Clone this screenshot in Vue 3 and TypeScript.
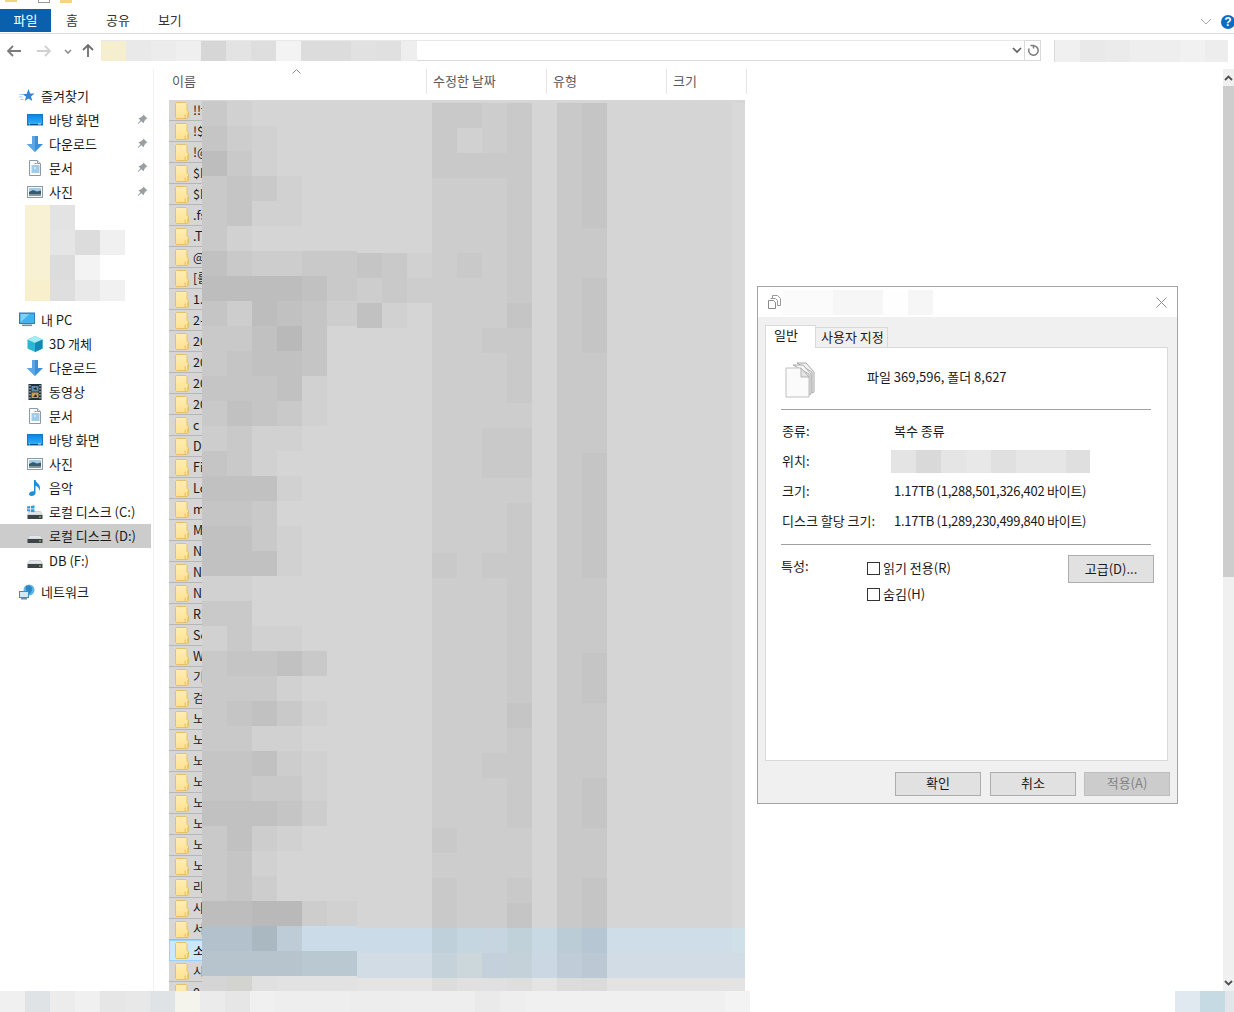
<script setup lang="ts">
const gray = (d: string): string => {
  const v = 0xb5 + 4 * parseInt(d, 10)
  return `rgb(${v},${v},${v})`
}
const fromDigits = (s: string): string[] => s.split('').map(gray)

const leftRows: string[][] = [
  '578888', '467888', '257888', '545788', '547788', '578888', '356655', '222235', '462346', '553148', '543348',
  '444378', '534578', '657788', '457888', '333788', '445888', '335788', '333788', '778888', '558888', '757788',
  '544358', '555788', '543578', '557788', '443678', '445578', '333468', '536788', '547888', '546888', '221167',
].map(fromDigits)
leftRows.push(
  ['#b2c1cb', '#b2c1cb', '#a9b8c1', '#bdccd6', '#ccdbe8', '#ccdbe8'],
  ['#b7c4ce', '#b7c4ce', '#b7c4ce', '#b7c4ce', '#bac8d2', '#bac8d2'],
  ['#d5d5d5', '#d3d3d0', '#e0e0e0', '#e2e2e2', '#e2e2e2', '#e2e2e2'],
)

const rightRows: string[][] = [
  '8885565854', '8885765854', '8885555854', '8886665854', '8886665854', '8886665855', '4576565855', '6566665854',
  '3786664854', '8886655854', '8886665855', '8886665855', '8886666855', '8886655855', '8886655854', '8886666854',
  '8886665854', '8886665854', '8885655854', '8886665855', '8886665855', '8886665855', '8886665854', '8886665854',
  '8886664855', '8886665855', '8886655855', '8886665854', '8886665854', '8885666855', '8886666855', '8885665854',
  '8885664854',
].map((s) => fromDigits(s + '888889'))
const pad = (head: string[], mid: string, last: string): string[] => [...head, mid, mid, mid, mid, mid, last]
rightRows.push(
  pad(['#ccdbe8', '#ccdbe8', '#ccdbe8', '#c0d0da', '#c6d6e0', '#c6d5df', '#c1d1da', '#c9d9e4', '#bcccd7', '#b6c6d2'], '#cfdde9', '#d0e0e8'),
  pad(['#d2dce5', '#d2dce5', '#d2dce5', '#c5d2da', '#ccd7dc', '#c4d0db', '#c4d1d8', '#cbd8e3', '#c0ccd7', '#bcc8d3'], '#d2dce5', '#d2dce5'),
  pad(['#e4e4e4', '#e4e4e4', '#e4e4e4', '#dddddd', '#e0e0e0', '#e0e0e0', '#dedede', '#e4e4e4', '#dcdcdc', '#dbdbdb'], '#e3e3e3', '#e3e3e3'),
)

const names: string[] = [
  '!!t', '!$', '!@', '$I', '$I', '.fs', '.T', '@', '[를', '1.', '2-', '20', '20', '20', '20', 'c', 'D', 'Fi', 'Lo', 'm', 'M',
  'N', 'N', 'N', 'RI', 'Se', 'W', '기', '검', '노', '노', '노', '노', '노', '노', '노', '노', '라', '사', '서', '소', '시', '0',
]
const selectedRow = 40

interface NavItem { label: string; icon: string; pin?: boolean; top?: boolean; selected?: boolean }
const favorites: NavItem[] = [
  { label: '즐겨찾기', icon: 'star', top: true },
  { label: '바탕 화면', icon: 'desktop', pin: true },
  { label: '다운로드', icon: 'down', pin: true },
  { label: '문서', icon: 'doc', pin: true },
  { label: '사진', icon: 'pic', pin: true },
]
const computer: NavItem[] = [
  { label: '내 PC', icon: 'pc', top: true },
  { label: '3D 개체', icon: 'cube' },
  { label: '다운로드', icon: 'down' },
  { label: '동영상', icon: 'film' },
  { label: '문서', icon: 'doc' },
  { label: '바탕 화면', icon: 'desktop' },
  { label: '사진', icon: 'pic' },
  { label: '음악', icon: 'note' },
  { label: '로컬 디스크 (C:)', icon: 'diskc' },
  { label: '로컬 디스크 (D:)', icon: 'disk', selected: true },
  { label: 'DB (F:)', icon: 'disk' },
]
const navMosaic: string[][] = [
  ['#f8f1d3', '#e3e3e3', '#ffffff', '#ffffff'],
  ['#f8f1d3', '#e5e5e5', '#dcdcdc', '#f0f0f0'],
  ['#f8f1d3', '#dcdcdc', '#f3f3f3', '#ffffff'],
  ['#f8f0cc', '#dedede', '#e9e9e9', '#f1f1f1'],
]
const addressCells: string[] = ['#f6efcf', '#e9e9e9', '#ececec', '#efefef', '#d6d6d6', '#e3e3e3', '#dedede', '#f3f3f3', '#dcdcdc', '#dcdcdc', '#e1e1e1', '#e0e0e0', '#eeeeee']
const searchCells: string[] = ['#f0f0f0', '#e9e9e9', '#ebebeb', '#eeeeee', '#eeeeee', '#f1f1f1', '#ededed']
const titleCells: string[] = ['#fbfbfb', '#fbfbfb', '#f6f6f6', '#f6f6f6', '#fefefe', '#f6f6f6']
const locationCells: string[] = ['#e4e4e4', '#d9d9d9', '#e5e5e5', '#e8e8e8', '#e0e0e0', '#e6e6e6', '#e6e6e6', '#dfdfdf']
const statusCells: string[] = [
  '#f0f0f0', '#dfe3e6', '#ececec', '#f0f0f0', '#e6e6e6', '#e8e8e8', '#dfe3e6', '#f5f4ec', '#ebebeb', '#e6e6e6',
  '#f0f0f0', '#eeeeee', '#eeeeee', '#eeeeee', '#ededed', '#ededed', '#eeeeee', '#eeeeee', '#eeeeee', '#eaeaea',
  '#eeeeee', '#f0f0f0', '#f0f0f0', '#f0f0f0', '#f0f0f0', '#f0f0f0', '#f0f0f0', '#f0f0f0', '#f0f0f0', '#f3f3f3',
]
const statusRight: string[] = ['#e0e9ef', '#c5dae2', '#e0e6ea']
</script>

<template>
  <div class="page">
    <svg class="sprite" width="0" height="0" aria-hidden="true">
      <defs>
        <linearGradient id="gBlue" x1="0" y1="0" x2="0" y2="1"><stop offset="0" stop-color="#0a86e2" /><stop offset="1" stop-color="#2eaefa" /></linearGradient>
        <linearGradient id="gFolder" x1="0" y1="0" x2="0" y2="1"><stop offset="0" stop-color="#ffedb4" /><stop offset="1" stop-color="#ffe290" /></linearGradient>
        <symbol id="star" viewBox="0 0 16 16"><path d="M9.500 1l1.600 4.400 4.400.2-3.500 2.800 1.300 4.600-3.900-2.600-3.600 2.700L7 8.600 3 6h4.600z" fill="#2f86d4" /><path d="M0.500 6.500h4M0 9h3.500M1.500 11.500h3" stroke="#9cc7ea" stroke-width="1" /></symbol>
        <symbol id="desktop" viewBox="0 0 16 16"><rect x="0" y="2" width="16" height="11.500" fill="#1279c8" /><rect x="1" y="3" width="14" height="9" fill="url(#gBlue)" /><path d="M1 12.500h14" stroke="#0b4f8a" /><path d="M11 12h3M2 12h1" stroke="#d9eefc" /></symbol>
        <symbol id="down" viewBox="0 0 16 16"><path d="M5 0h6v8h5l-8 8-8-8h5z" fill="#3d8fd6" /><path d="M5 0h3v16l-8-8h5z" fill="#5aa6e6" /></symbol>
        <symbol id="doc" viewBox="0 0 16 16"><path d="M2.500.5h8l3 3v12h-11z" fill="#fbfdff" stroke="#8c9aa8" /><path d="M10.500.5v3h3" fill="#dfe8f0" stroke="#8c9aa8" /><path d="M7.500 3.500h2M4.500 6h8M4.500 8h3M8.500 8h4M4.500 10h8M4.500 12h8" stroke="#4a9ad0" /></symbol>
        <symbol id="pic" viewBox="0 0 16 16"><rect x=".5" y="2.500" width="15" height="11" fill="#f7f9fa" stroke="#8b9aa3" /><rect x="2" y="4" width="12" height="4" fill="#a9cbe0" /><path d="M2 8l4-2 4 1.500 4-1V12H2z" fill="#375a6c" /><rect x="2" y="10" width="12" height="2" fill="#7c98a6" /></symbol>
        <symbol id="pc" viewBox="0 0 16 16"><rect x=".5" y="1" width="15" height="10.500" fill="#3a9ad9" stroke="#2a7fb8" /><rect x="1.500" y="2" width="13" height="8.500" fill="#7fd0f7" /><path d="M1.500 10.500l9-8.500h4v8.500z" fill="#3fb2ec" /><rect x="3" y="12.500" width="10" height="1.600" fill="#76909e" /></symbol>
        <symbol id="cube" viewBox="0 0 16 16"><path d="M8 0l7.500 3.500v9L8 16 .5 12.500v-9z" fill="#2bb7d3" /><path d="M8 0l7.500 3.500L8 7 .5 3.500z" fill="#a6ecf3" /><path d="M8 7v9l7.500-3.500v-9z" fill="#1488b4" /></symbol>
        <symbol id="film" viewBox="0 0 16 16"><rect x="1.500" y="0" width="13" height="16" fill="#20303a" /><rect x="4.500" y="2" width="7" height="5.500" fill="#5f8fb0" /><rect x="4.500" y="8.500" width="7" height="5.500" fill="#c8a24a" /><path d="M6 5l3-2 1 3zM6 13l3-3 1 3z" fill="#2a2a20" /><path d="M3 1v14M13 1v14" stroke="#dfe6ea" stroke-width="1" stroke-dasharray="1.500 1.500" /></symbol>
        <symbol id="note" viewBox="0 0 16 16"><path d="M7 0h1.500c.5 3 4.500 3.500 4.500 8 0 1-.3 2-.8 2.800.2-3-2-4.600-3.700-5V13c0 1.800-2 3-4 3-1.500 0-2.500-.8-2.500-2 0-1.600 2-2.800 4-2.800.4 0 .7 0 1 .1z" fill="#1d8ed8" /></symbol>
        <symbol id="disk" viewBox="0 0 16 16"><path d="M2.500 7.500h11L15.500 11H.5z" fill="#e3e6e8" stroke="#b7bcc0" stroke-width=".6" /><rect x=".5" y="11" width="15" height="4" fill="#3d4347" /><rect x="12" y="12.500" width="2" height="1" fill="#9ee05a" /></symbol>
        <symbol id="diskc" viewBox="0 0 16 16"><path d="M2.500 7.500h11L15.500 11H.5z" fill="#e3e6e8" stroke="#b7bcc0" stroke-width=".6" /><rect x=".5" y="11" width="15" height="4" fill="#3d4347" /><rect x="12" y="12.500" width="2" height="1" fill="#9ee05a" /><path d="M0 2.500l3-.5v2.500H0zM3.800 1.900l3.700-.6v3.200H3.800zM0 5.200h3v2.400l-3-.4zM3.800 5.200h3.700v3l-3.700-.5z" fill="#2b9fe0" /></symbol>
        <symbol id="net" viewBox="0 0 16 16"><circle cx="10" cy="6" r="5.500" fill="#5db3e6" /><path d="M7 2c3-1.500 6 0 6 3s-2 5-3.500 5.500C9 8 6 7 7 2z" fill="#2d86c4" /><rect x=".5" y="7.500" width="9" height="6" fill="#cfe9f8" stroke="#3a8fc8" /><rect x="2" y="14" width="6" height="1.500" fill="#6e8ea3" /></symbol>
        <symbol id="pin" viewBox="0 0 10 10"><path d="M5.800.5l3.700 3.500-1.300.6-1.700 2.200-.4 1.700L3.800 6.600 1 9 .6 8.600l2.500-2.900L1.200 3.900l1.700-.4 2.300-1.700z" fill="#9a9fa3" /></symbol>
        <symbol id="folder" viewBox="0 0 14 17"><path d="M1.500.5h9.500l1 1v7l1.500 1v6l-1 1h-11l-1-1V1.500z" fill="url(#gFolder)" stroke="#e4c06a" /><path d="M9.500 12.500h1.500v3.500H9.500zM12 11h1v5h-1z" fill="#edc970" /></symbol>
      </defs>
    </svg>

    <div class="titlebar">
      <span class="tb-folder"></span>
      <span class="tb-doc"></span>
      <span class="tb-folder second"></span>
    </div>

    <div class="ribbon">
      <div class="tab-file">파일</div>
      <div class="tab t-home">홈</div>
      <div class="tab t-share">공유</div>
      <div class="tab t-view">보기</div>
      <div class="ribbon-right">
        <svg width="12" height="7" viewBox="0 0 12 7" class="ribbon-chevron"><path d="M1 1l5 5 5-5" fill="none" stroke="#a6a6a6" stroke-width="1" /></svg>
        <div class="help">?</div>
      </div>
    </div>

    <div class="addressbar">
      <div class="nav-btns">
        <svg class="b-back" width="14" height="12" viewBox="0 0 14 12"><path d="M1 6h13M6 1L1 6l5 5" fill="none" stroke="#7a7a7a" stroke-width="1.800" /></svg>
        <svg class="b-fwd" width="14" height="12" viewBox="0 0 14 12"><path d="M0 6h13M8 1l5 5-5 5" fill="none" stroke="#d0d0d0" stroke-width="1.800" /></svg>
        <svg class="b-drop" width="8" height="5" viewBox="0 0 8 5"><path d="M1 1l3 3 3-3" fill="none" stroke="#8a8a8a" stroke-width="1.500" /></svg>
        <svg class="b-up" width="12" height="13" viewBox="0 0 12 13"><path d="M6 13V1M1 6l5-5 5 5" fill="none" stroke="#6e6e6e" stroke-width="1.800" /></svg>
      </div>
      <div class="address">
        <div class="address-mosaic">
          <span v-for="(c, i) in addressCells" :key="i" class="address-cell" :style="{ background: c }"></span>
        </div>
        <svg class="addr-chevron" width="10" height="7" viewBox="0 0 10 7"><path d="M1 1l4 4 4-4" fill="none" stroke="#5f5f5f" stroke-width="1.700" /></svg>
      </div>
      <div class="refresh">
        <svg width="12" height="13" viewBox="0 0 12 13"><path d="M3.500 1.500h3v3M6 1.800A4.700 4.700 0 1 1 2.200 4.500" fill="none" stroke="#7d7d7d" stroke-width="1.500" /></svg>
      </div>
      <div class="search">
        <span v-for="(c, i) in searchCells" :key="i" class="search-cell" :style="{ background: c }"></span>
      </div>
    </div>

    <div class="main">
      <aside class="sidebar">
        <div v-for="item in favorites" :key="item.label" class="nav-row" :class="{ top: item.top }">
          <svg class="nav-icon"><use :href="'#' + item.icon" /></svg>
          <span class="nav-label">{{ item.label }}</span>
          <svg v-if="item.pin" class="pin"><use href="#pin" /></svg>
        </div>
        <div class="nav-mosaic">
          <div v-for="(r, ri) in navMosaic" :key="ri" class="nav-mosaic-row">
            <span v-for="(c, ci) in r" :key="ci" class="nav-mosaic-cell" :style="{ background: c }"></span>
          </div>
        </div>
        <div
          v-for="item in computer"
          :key="item.label"
          class="nav-row"
          :class="{ top: item.top, selected: item.selected }"
        >
          <svg class="nav-icon"><use :href="'#' + item.icon" /></svg>
          <span class="nav-label">{{ item.label }}</span>
        </div>
        <div class="nav-row top network">
          <svg class="nav-icon"><use href="#net" /></svg>
          <span class="nav-label">네트워크</span>
        </div>
      </aside>

      <section class="content">
        <div class="list-header">
          <div class="col col-name">이름<svg class="sort" width="9" height="5" viewBox="0 0 9 5"><path d="M.5 4.500l4-4 4 4" fill="none" stroke="#8a8a8a" /></svg></div>
          <div class="col col-date">수정한 날짜</div>
          <div class="col col-type">유형</div>
          <div class="col col-size">크기</div>
        </div>
        <div class="rows">
          <div v-for="(n, i) in names" :key="i" class="row" :class="{ sel: i === selectedRow }">
            <svg class="folder"><use href="#folder" /></svg>
            <span class="row-name">{{ n }}</span>
          </div>
        </div>
        <div class="mosaic-left">
          <div v-for="(r, ri) in leftRows" :key="ri" class="mosaic-row">
            <span v-for="(c, ci) in r" :key="ci" class="m-cell" :style="{ background: c }"></span>
          </div>
        </div>
        <div class="mosaic-right">
          <div v-for="(r, ri) in rightRows" :key="ri" class="mosaic-row">
            <span v-for="(c, ci) in r" :key="ci" class="m-cell" :class="{ 'm-last': ci === 15 }" :style="{ background: c }"></span>
          </div>
        </div>
      </section>

      <div class="scrollbar">
        <div class="sb-btn">
          <svg width="9" height="6" viewBox="0 0 9 6"><path d="M1 5l3.500-3.500L8 5" fill="none" stroke="#505050" stroke-width="1.800" /></svg>
        </div>
        <div class="sb-thumb"></div>
        <div class="sb-track"></div>
        <div class="sb-btn">
          <svg width="9" height="6" viewBox="0 0 9 6"><path d="M1 1l3.500 3.500L8 1" fill="none" stroke="#505050" stroke-width="1.800" /></svg>
        </div>
      </div>
    </div>

    <div class="statusbar">
      <div class="status-left">
        <span v-for="(c, i) in statusCells" :key="i" class="status-cell" :style="{ background: c }"></span>
      </div>
      <div class="status-right">
        <span v-for="(c, i) in statusRight" :key="i" class="status-cell" :style="{ background: c }"></span>
      </div>
    </div>

    <div class="dialog">
      <div class="dlg-title">
        <svg class="dlg-title-icon" width="13" height="14" viewBox="0 0 13 14"><path d="M4.500 3.500v-3h5l3 3v7h-3M2.500 3.500h5l2 2v5" fill="none" stroke="#9a9a9a" /><path d="M.5 5.500h5l2 2v6h-7z" fill="#fff" stroke="#8a8a8a" /></svg>
        <div class="dlg-title-mosaic">
          <span v-for="(c, i) in titleCells" :key="i" class="title-cell" :style="{ background: c }"></span>
        </div>
        <svg class="dlg-close" width="11" height="11" viewBox="0 0 11 11"><path d="M.5.500l10 10M10.500.500l-10 10" stroke="#8c8c8c" fill="none" /></svg>
      </div>
      <div class="dlg-body">
        <div class="dlg-tabs">
          <div class="dlg-tab active">일반</div>
          <div class="dlg-tab">사용자 지정</div>
        </div>
        <div class="panel">
          <div class="summary">
            <svg class="files-icon" width="30" height="36" viewBox="0 0 30 36">
              <path d="M12 1h9l8 9v20l-2 1V10z" fill="#f2f2f2" stroke="#a8a8a8" />
              <path d="M8 3h10l8 9v20l-2 1V12z" fill="#f6f6f6" stroke="#a8a8a8" />
              <path d="M1 6h15l8 9v20H1z" fill="#fbfbfb" stroke="#c0c0c0" />
              <path d="M16 6v9h8z" fill="#e6e6e6" stroke="#b0b0b0" />
            </svg>
            <span class="summary-text">파일 369,596, 폴더 8,627</span>
          </div>
          <div class="rule"></div>
          <div class="prop first"><span class="prop-label">종류:</span><span class="prop-value kr">복수 종류</span></div>
          <div class="prop">
            <span class="prop-label">위치:</span>
            <div class="loc-mosaic"><span v-for="(c, i) in locationCells" :key="i" class="loc-cell" :style="{ background: c }"></span></div>
          </div>
          <div class="prop"><span class="prop-label">크기:</span><span class="prop-value">1.17TB (1,288,501,326,402 바이트)</span></div>
          <div class="prop"><span class="prop-label">디스크 할당 크기:</span><span class="prop-value">1.17TB (1,289,230,499,840 바이트)</span></div>
          <div class="rule second"></div>
          <div class="attrs">
            <span class="attr-label">특성:</span>
            <div class="checks">
              <label class="check"><span class="box"></span>읽기 전용(R)</label>
              <label class="check"><span class="box"></span>숨김(H)</label>
            </div>
            <button class="btn adv">고급(D)...</button>
          </div>
        </div>
        <div class="dlg-buttons">
          <button class="btn main-btn">확인</button>
          <button class="btn main-btn">취소</button>
          <button class="btn main-btn disabled">적용(A)</button>
        </div>
      </div>
    </div>
  </div>
</template>

<style>
html, body { margin: 0; padding: 0; background: #fff; }
</style>

<style scoped>
.page {
  width: 1234px;
  height: 1012px;
  position: relative;
  overflow: hidden;
  display: flex;
  flex-direction: column;
  background: #fff;
  font-family: "Noto Sans CJK KR", "Open Sans", sans-serif;
  font-size: 13px;
  line-height: 18px;
  color: #1a1a1a;
}
.sprite { position: absolute; }

.titlebar { height: 9px; flex: none; display: flex; align-items: flex-start; padding-left: 5px; }
.tb-folder { width: 12px; height: 2px; background: #f4d47c; }
.tb-folder.second { margin-left: 10px; height: 3px; }
.tb-doc { width: 12px; height: 3px; margin-left: 21px; background: #fff; border: 1px solid #9a9a9a; border-top: 0; box-sizing: border-box; }

.ribbon { height: 25px; flex: none; display: flex; border-bottom: 1px solid #dadbdc; box-sizing: border-box; align-items: stretch; }
.tab-file { width: 51px; height: 23px; padding-bottom: 2px; box-sizing: border-box; background: #0a60ad; color: #fff; display: flex; align-items: center; justify-content: center; }
.tab { display: flex; align-items: center; height: 23px; padding-bottom: 2px; box-sizing: border-box; color: #333; }
.t-home { margin-left: 15px; }
.t-share { margin-left: 28px; }
.t-view { margin-left: 28px; }
.ribbon-right { margin-left: auto; display: flex; align-items: center; height: 23px; }
.ribbon-chevron { margin-right: 9px; margin-top: 2px; }
.help {
  width: 14px; height: 14px; border-radius: 50%; margin-right: -1px;
  background: #0a6cc4; color: #fff; font: bold 12px/14px "Liberation Sans", sans-serif; text-align: center; margin-top: 2px;
}

.addressbar { height: 32px; flex: none; display: flex; align-items: flex-start; padding-top: 6px; box-sizing: border-box; }
.nav-btns { width: 101px; height: 21px; flex: none; display: flex; align-items: center; padding-left: 7px; box-sizing: border-box; }
.b-fwd { margin-left: 16px; }
.b-drop { margin-left: 13px; margin-top: 1px; }
.b-up { margin-left: 10px; }
.address {
  width: 924px; height: 21px; flex: none; box-sizing: border-box;
  border: 1px solid #d9d9d9; border-left: 0; border-top-color: #e8e8e8; display: flex; align-items: center; justify-content: space-between;
}
.address-mosaic { display: flex; height: 20px; align-self: flex-start; }
.address-cell { width: 25px; height: 20px; }
.address-cell:last-child { width: 16px; }
.addr-chevron { margin-right: 2px; }
.refresh {
  width: 16px; height: 21px; flex: none; box-sizing: border-box; border: 1px solid #d9d9d9; border-left: 0;
  display: flex; align-items: center; justify-content: center;
}
.search { margin-left: 13px; display: flex; height: 22px; border-left: 1px solid #d9d9d9; }
.search-cell { width: 25px; height: 22px; }
.search-cell:last-child { width: 23px; }

.main { flex: 1; min-height: 0; display: flex; overflow: hidden; }

.sidebar { flex: none; border-right: 1px solid #f2f2f2; margin-top: 3px; box-sizing: border-box; width: 154px; padding-top: 15px; }
.nav-row { height: 24px; display: flex; align-items: center; padding-left: 27px; position: relative; width: 151px; box-sizing: border-box; }
.nav-row.top { padding-left: 19px; }
.nav-row.selected { background: #cccccc; }
.nav-icon { width: 16px; height: 16px; flex: none; margin-right: 6px; }
.pin { position: absolute; left: 137px; top: 6px; width: 11px; height: 11px; }
.nav-label { white-space: nowrap; }
.nav-mosaic { margin: 1px 0 7px 25px; }
.nav-mosaic-row { display: flex; height: 25px; }
.nav-mosaic-row:last-child { height: 21px; }
.nav-mosaic-cell { width: 25px; }
.network { margin-top: 7px; }
.nav-row:nth-last-child(2) { margin-top: 1px; }

.content { flex: 1; min-width: 0; position: relative; overflow: hidden; }
.list-header { height: 34px; display: flex; padding: 3px 0 6px 15px; box-sizing: border-box; color: #5a5a5a; }
.col { box-sizing: border-box; border-right: 1px solid #e3e5e7; display: flex; align-items: center; position: relative; padding-bottom: 2px; }
.col-name { width: 258px; padding-left: 3px; }
.col-date, .col-type { width: 120px; padding-left: 6px; }
.col-size { width: 80px; padding-left: 6px; }
.sort { position: absolute; left: 123px; top: 0; }

.rows { width: 576px; margin-left: 15px; }
.row {
  height: 21px; box-sizing: border-box; display: flex; align-items: center; background: #d6d6d6;
  border-bottom: 1px solid #b6b6b6; overflow: hidden;
}
.row.sel { background: #cce8ff; border: 1px solid #99d1ff; color: #000; }
.folder { width: 14px; height: 17px; margin-left: 6px; flex: none; }
.row-name { margin-left: 4px; white-space: nowrap; font-size: 12.5px; }
.row.sel .folder { margin-left: 5px; }

.mosaic-left { position: absolute; left: 48px; top: 35px; width: 155px; }
.mosaic-right { position: absolute; left: 203px; top: 37px; width: 388px; }
.mosaic-row { display: flex; height: 25px; }
.m-cell { width: 25px; flex: none; }
.mosaic-left .m-cell:last-child { width: 30px; }
.m-last { width: 13px; }

.scrollbar { width: 11px; flex: none; margin-top: 3px; display: flex; flex-direction: column; background: #f0f0f0; }
.sb-btn { height: 17px; display: flex; align-items: center; justify-content: center; flex: none; }
.sb-thumb { height: 491px; background: #cdcdcd; flex: none; }
.sb-track { flex: 1; }

.statusbar { height: 21px; flex: none; display: flex; justify-content: space-between; }
.status-left, .status-right { display: flex; }
.status-cell { width: 25px; height: 21px; display: block; }
.status-right .status-cell:last-child { width: 9px; }

.dialog {
  position: absolute; left: 757px; top: 286px; width: 421px; height: 518px; box-sizing: border-box;
  border: 1px solid #a3a3a3; background: #f0f0f0; display: flex; flex-direction: column;
}
.dlg-title { height: 30px; flex: none; background: #fff; display: flex; align-items: center; position: relative; }
.dlg-title-icon { margin-left: 10px; flex: none; }
.dlg-title-mosaic { display: flex; margin-left: 2px; height: 25px; }
.title-cell { width: 25px; }
.dlg-close { margin-left: auto; margin-right: 10px; }
.dlg-body { flex: 1; padding: 8px 7px 7px 7px; display: flex; flex-direction: column; }
.dlg-tabs { display: flex; height: 22px; align-items: flex-end; position: relative; z-index: 1; flex: none; }
.dlg-tab {
  height: 20px; box-sizing: border-box; border: 1px solid #d9d9d9; border-bottom: 0; border-left: 0;
  padding: 0 3px 2px 5px; display: flex; align-items: center; white-space: nowrap; background: #f0f0f0;
}
.dlg-tab.active {
  height: 23px; width: 51px; background: #fff; border-left: 1px solid #d9d9d9; padding: 0 0 5px 8px; margin-bottom: -1px;
}
.panel { height: 414px; flex: none; background: #fff; border: 1px solid #d9d9d9; box-sizing: border-box; padding: 0 15px; width: 403px; }
.summary { height: 61px; display: flex; align-items: center; }
.files-icon { margin-left: 4px; margin-top: 2px; }
.summary-text { margin-left: 52px; margin-bottom: 3px; }
.rule { height: 1px; background: #a0a0a0; width: 370px; }
.prop { height: 30px; display: flex; align-items: center; }
.prop.first { margin-top: 6px; }
.prop-label { width: 113px; padding-left: 1px; box-sizing: border-box; white-space: nowrap; flex: none; }
.prop-value { white-space: nowrap; letter-spacing: -0.27px; }
.prop-value.kr { letter-spacing: 0; }
.loc-mosaic { display: flex; margin-left: -3px; height: 23px; }
.loc-cell { width: 25px; }
.loc-cell:last-child { width: 24px; }
.rule.second { margin-top: 8px; }
.attrs { display: flex; align-items: flex-start; padding-top: 10px; }
.attr-label { width: 86px; flex: none; margin-top: 2px; }
.checks { display: flex; flex-direction: column; gap: 6px; width: 201px; flex: none; margin-top: 3px; }
.check { display: flex; align-items: center; height: 20px; white-space: nowrap; }
.box { width: 13px; height: 13px; border: 1px solid #333; box-sizing: border-box; margin-right: 3px; background: #fff; }
.btn {
  font: inherit; color: #1a1a1a; background: #e1e1e1; border: 1px solid #adadad; padding: 0 0 2px; box-sizing: border-box;
}
.adv { width: 86px; height: 28px; flex: none; padding: 0; }
.dlg-buttons { display: flex; justify-content: flex-end; gap: 9px; margin-top: 11px; }
.main-btn { width: 86px; height: 24px; }
.main-btn.disabled { background: #cccccc; border-color: #bfbfbf; color: #838383; margin-left: -1px; }
</style>
